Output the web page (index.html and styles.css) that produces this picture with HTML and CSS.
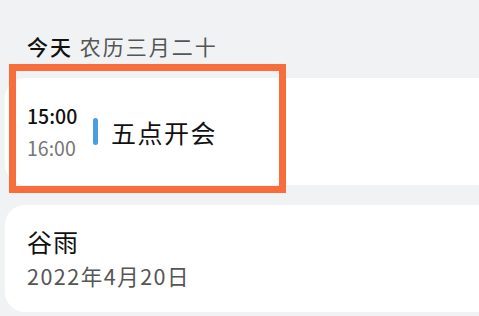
FILE: index.html
```html
<!DOCTYPE html>
<html lang="zh-CN">
<head>
    <meta charset="UTF-8">
    <meta name="viewport" content="width=device-width, initial-scale=1.0">
    <title>日程</title>
    <link rel="stylesheet" href="styles.css">
</head>
<body>

    <div class="agenda">
        <div class="day-title">
            <span class="today">今天</span>
            <span class="lunar">农历三月二十</span>
        </div>

        <!-- 当天的日程 -->
        <div class="card event highlighted">
            <div class="times">
                <div class="start">15:00</div>
                <div class="end">16:00</div>
            </div>
            <div class="bar"></div>
            <div class="event-title">五点开会</div>
        </div>

        <!-- 节气 -->
        <div class="card term">
            <div class="term-name">谷雨</div>
            <div class="term-date">2022年4月20日</div>
        </div>
    </div>

</body>
</html>
```

FILE: styles.css
```css
body {
    margin: 0;
    background-color: #f1f2f4;
    font-family: "Noto Sans CJK SC", sans-serif;
    overflow: hidden;
}

.agenda {
    padding: 33px 0 0 5px;
}

.day-title {
    padding-left: 22px;
    font-size: 21px;
    line-height: 26px;
    letter-spacing: 2px;
    margin-bottom: 19px;
}

.today {
    color: #111;
    font-weight: 500;
}

.lunar {
    color: #555;
}

/* 卡片伸出屏幕右侧，所以右边不画圆角 */
.card {
    position: relative;
    height: 107px;
    padding-left: 22px;
    background-color: white;
    border-radius: 20px 0 0 20px;
}

.event {
    display: flex;
    align-items: center;
}

.times {
    width: 66px;
    font-size: 19.5px;
    line-height: 32px;
}

.start {
    color: #111;
    font-weight: 500;
}

.end {
    color: #777;
}

.bar {
    width: 5px;
    height: 27px;
    margin-right: 13px;
    border-radius: 3px;
    background-color: #4a9de0;
}

.event-title {
    font-size: 25px;
    color: #111;
    letter-spacing: 1.5px;
}

/* 选中框 */
.highlighted::after {
    content: "";
    position: absolute;
    left: 4px;
    top: -14px;
    width: 277px;
    height: 129px;
    border: 7px solid #f86d3c;
    box-sizing: border-box;
}

.term {
    margin-top: 20px;
    display: flex;
    flex-direction: column;
    justify-content: center;
}

.term-name {
    font-size: 25px;
    line-height: 34px;
    color: #111;
    letter-spacing: 1px;
}

.term-date {
    font-size: 21.5px;
    line-height: 36px;
    color: #555;
    letter-spacing: 1.5px;
}
```
